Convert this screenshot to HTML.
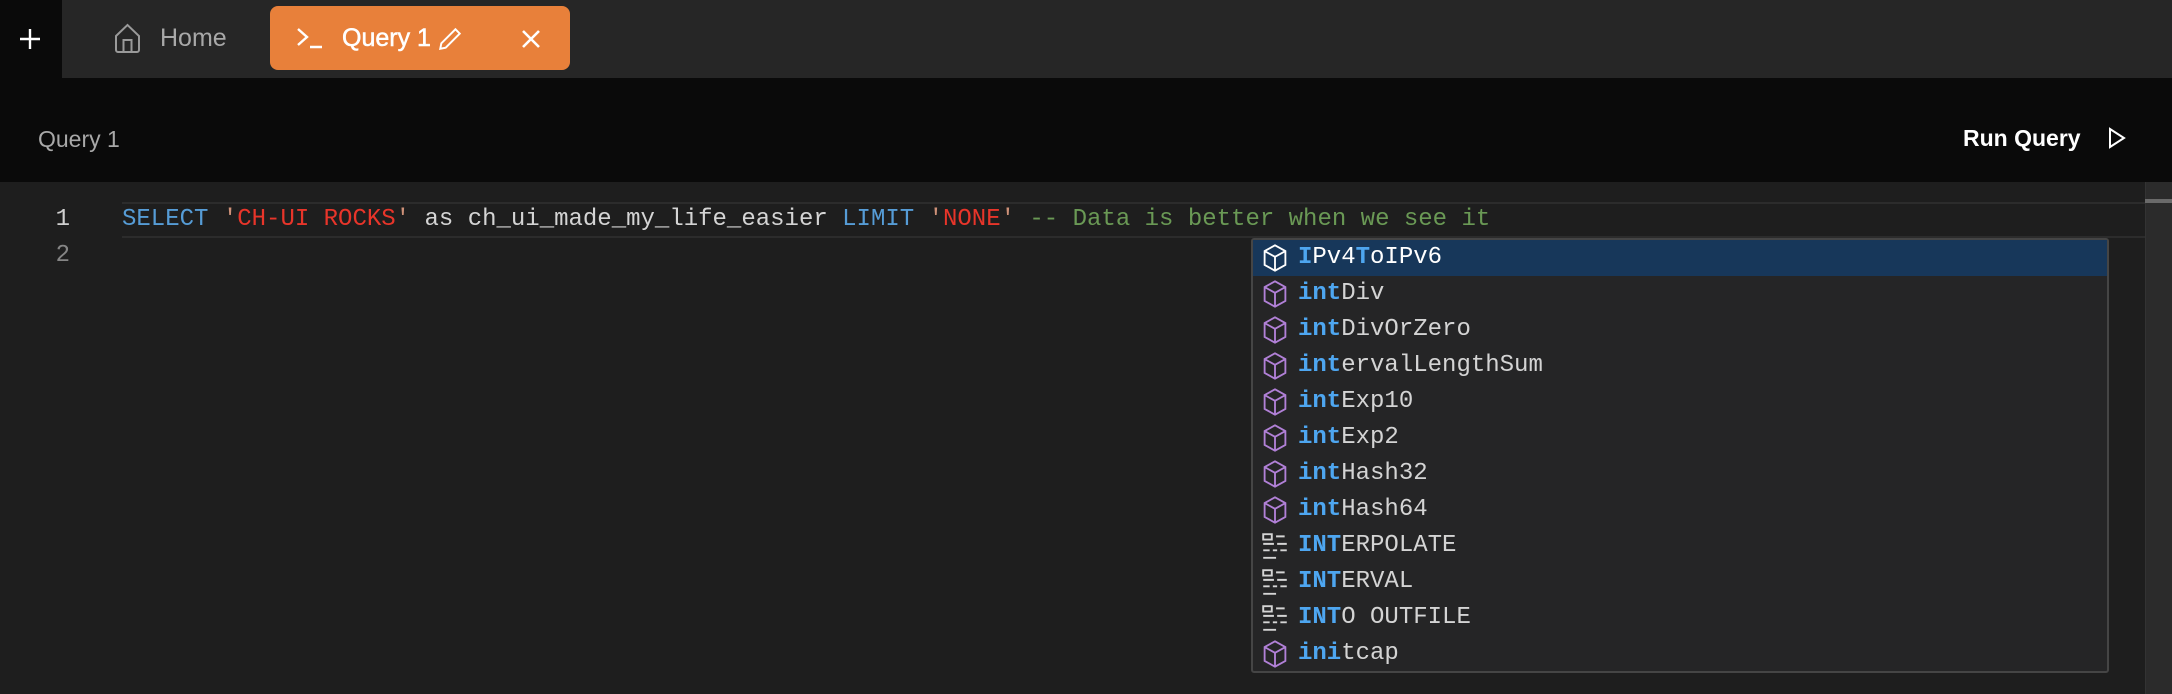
<!DOCTYPE html>
<html><head><meta charset="utf-8"><style>
*{margin:0;padding:0;box-sizing:border-box}
body{width:2172px;height:694px;background:#1e1e1e;position:relative;overflow:hidden;font-family:"Liberation Sans",sans-serif}
.abs{position:absolute}
.mono{font-family:"Liberation Mono",monospace;font-size:24px;white-space:pre}
.row{position:absolute;left:0;width:100%;height:36px;line-height:36px;color:#d4d4d4}
.row svg{position:absolute;left:8px;top:3px}
.row span.t{position:absolute;left:45px}
.h{color:#4ea6f0;font-weight:bold}
</style></head><body>
<div class="abs" style="left:0;top:0;width:2172px;height:78px;background:#262626"></div>
<div class="abs" style="left:0;top:0;width:62px;height:78px;background:#0a0a0a"></div>
<svg class="abs" style="left:18px;top:27px" width="24" height="24" viewBox="0 0 24 24"><path d="M12 2v20M2 12h20" stroke="#fff" stroke-width="2.4"/></svg>
<svg class="abs" style="left:114px;top:23px" width="27" height="30" viewBox="0 0 27 30"><path d="M2 13L13.5 2 25 13v14a2 2 0 0 1-2 2H4a2 2 0 0 1-2-2z M9.5 29V17h8v12" fill="none" stroke="#9a9a9a" stroke-width="2"/></svg>
<div class="abs" style="left:160px;top:24px;font-size:25px;color:#a8a8a8">Home</div>
<div class="abs" style="left:270px;top:6px;width:300px;height:64px;background:#e8803a;border-radius:8px"></div>
<svg class="abs" style="left:296px;top:26px" width="28" height="24" viewBox="0 0 28 24"><path d="M2 3l9 8-9 8M14 21h12" fill="none" stroke="#fff" stroke-width="2.4"/></svg>
<div class="abs" style="left:342px;top:24px;font-size:25px;color:#fff;-webkit-text-stroke:0.5px #fff">Query 1</div>
<svg class="abs" style="left:437px;top:26px" width="26" height="26" viewBox="0 0 24 24"><path d="M17 3l4 4L8 20l-5 1 1-5z" fill="none" stroke="#fff" stroke-width="1.8"/></svg>
<svg class="abs" style="left:520px;top:28px" width="22" height="22" viewBox="0 0 22 22"><path d="M3 3l16 16M19 3L3 19" stroke="#fff" stroke-width="2.6"/></svg>
<div class="abs" style="left:0;top:78px;width:2172px;height:104px;background:#0a0a0a"></div>
<div class="abs" style="left:38px;top:126px;font-size:23px;color:#a8a8a8">Query 1</div>
<div class="abs" style="left:1963px;top:125px;font-size:23px;color:#fff;font-weight:bold">Run Query</div>
<svg class="abs" style="left:2107px;top:127px" width="20" height="22" viewBox="0 0 20 22"><path d="M3 2l14 9-14 9z" fill="none" stroke="#fff" stroke-width="2"/></svg>
<div class="abs" style="left:2145px;top:182px;width:27px;height:512px;background:#2b2b2b;border-left:1px solid #333"></div>
<div class="abs" style="left:2145px;top:199px;width:27px;height:4px;background:#6a6a6a"></div>
<div class="abs" style="left:122px;top:202px;width:2023px;height:36px;border-top:2px solid #2c2c2c;border-bottom:2px solid #2c2c2c"></div>
<div class="abs mono" style="left:50px;top:202px;line-height:36px;color:#d0d0d0;width:20px;text-align:right">1</div>
<div class="abs mono" style="left:50px;top:238px;line-height:36px;color:#858585;width:20px;text-align:right">2</div>
<div class="abs mono" style="left:122px;top:202px;line-height:36px;color:#d4d4d4"><span style="color:#569cd6">SELECT</span> <span style="color:#ce9178">'</span><span style="color:#e8352a">CH-UI ROCKS</span><span style="color:#ce9178">'</span> as ch_ui_made_my_life_easier <span style="color:#569cd6">LIMIT</span> <span style="color:#ce9178">'</span><span style="color:#e8352a">NONE</span><span style="color:#ce9178">'</span> <span style="color:#6a9955">-- Data is better when we see it</span></div>
<div class="abs mono" style="left:1251px;top:238px;width:858px;height:435px;background:#252526;border:2px solid #454545;border-radius:3px">
<div class="row" style="top:0;background:#17375a;color:#fff"><svg width="28" height="30" viewBox="0 0 24 26"><path d="M12 2l9 5v12l-9 5-9-5V7zM3 7l9 5 9-5M12 12v12" fill="none" stroke="#fff" stroke-width="1.6"/></svg><span class="t"><span class="h">I</span>Pv4<span class="h">T</span>oIPv6</span></div>
<div class="row" style="top:36px"><svg width="28" height="30" viewBox="0 0 24 26"><path d="M12 2l9 5v12l-9 5-9-5V7zM3 7l9 5 9-5M12 12v12" fill="none" stroke="#b180d7" stroke-width="1.6"/></svg><span class="t"><span class="h">int</span>Div</span></div>
<div class="row" style="top:72px"><svg width="28" height="30" viewBox="0 0 24 26"><path d="M12 2l9 5v12l-9 5-9-5V7zM3 7l9 5 9-5M12 12v12" fill="none" stroke="#b180d7" stroke-width="1.6"/></svg><span class="t"><span class="h">int</span>DivOrZero</span></div>
<div class="row" style="top:108px"><svg width="28" height="30" viewBox="0 0 24 26"><path d="M12 2l9 5v12l-9 5-9-5V7zM3 7l9 5 9-5M12 12v12" fill="none" stroke="#b180d7" stroke-width="1.6"/></svg><span class="t"><span class="h">int</span>ervalLengthSum</span></div>
<div class="row" style="top:144px"><svg width="28" height="30" viewBox="0 0 24 26"><path d="M12 2l9 5v12l-9 5-9-5V7zM3 7l9 5 9-5M12 12v12" fill="none" stroke="#b180d7" stroke-width="1.6"/></svg><span class="t"><span class="h">int</span>Exp10</span></div>
<div class="row" style="top:180px"><svg width="28" height="30" viewBox="0 0 24 26"><path d="M12 2l9 5v12l-9 5-9-5V7zM3 7l9 5 9-5M12 12v12" fill="none" stroke="#b180d7" stroke-width="1.6"/></svg><span class="t"><span class="h">int</span>Exp2</span></div>
<div class="row" style="top:216px"><svg width="28" height="30" viewBox="0 0 24 26"><path d="M12 2l9 5v12l-9 5-9-5V7zM3 7l9 5 9-5M12 12v12" fill="none" stroke="#b180d7" stroke-width="1.6"/></svg><span class="t"><span class="h">int</span>Hash32</span></div>
<div class="row" style="top:252px"><svg width="28" height="30" viewBox="0 0 24 26"><path d="M12 2l9 5v12l-9 5-9-5V7zM3 7l9 5 9-5M12 12v12" fill="none" stroke="#b180d7" stroke-width="1.6"/></svg><span class="t"><span class="h">int</span>Hash64</span></div>
<div class="row" style="top:288px"><svg width="28" height="30" viewBox="0 0 26 28"><path d="M2 3h8v5H2zM14 5h8M2 12h10M15 12h9M2 18h6M11 18h4M18 18h6M2 25h12" fill="none" stroke="#d4d4d4" stroke-width="1.8"/></svg><span class="t"><span class="h">INT</span>ERPOLATE</span></div>
<div class="row" style="top:324px"><svg width="28" height="30" viewBox="0 0 26 28"><path d="M2 3h8v5H2zM14 5h8M2 12h10M15 12h9M2 18h6M11 18h4M18 18h6M2 25h12" fill="none" stroke="#d4d4d4" stroke-width="1.8"/></svg><span class="t"><span class="h">INT</span>ERVAL</span></div>
<div class="row" style="top:360px"><svg width="28" height="30" viewBox="0 0 26 28"><path d="M2 3h8v5H2zM14 5h8M2 12h10M15 12h9M2 18h6M11 18h4M18 18h6M2 25h12" fill="none" stroke="#d4d4d4" stroke-width="1.8"/></svg><span class="t"><span class="h">INT</span>O OUTFILE</span></div>
<div class="row" style="top:396px"><svg width="28" height="30" viewBox="0 0 24 26"><path d="M12 2l9 5v12l-9 5-9-5V7zM3 7l9 5 9-5M12 12v12" fill="none" stroke="#b180d7" stroke-width="1.6"/></svg><span class="t"><span class="h">ini</span>t<span>cap</span></span></div>
</div>
</body></html>
